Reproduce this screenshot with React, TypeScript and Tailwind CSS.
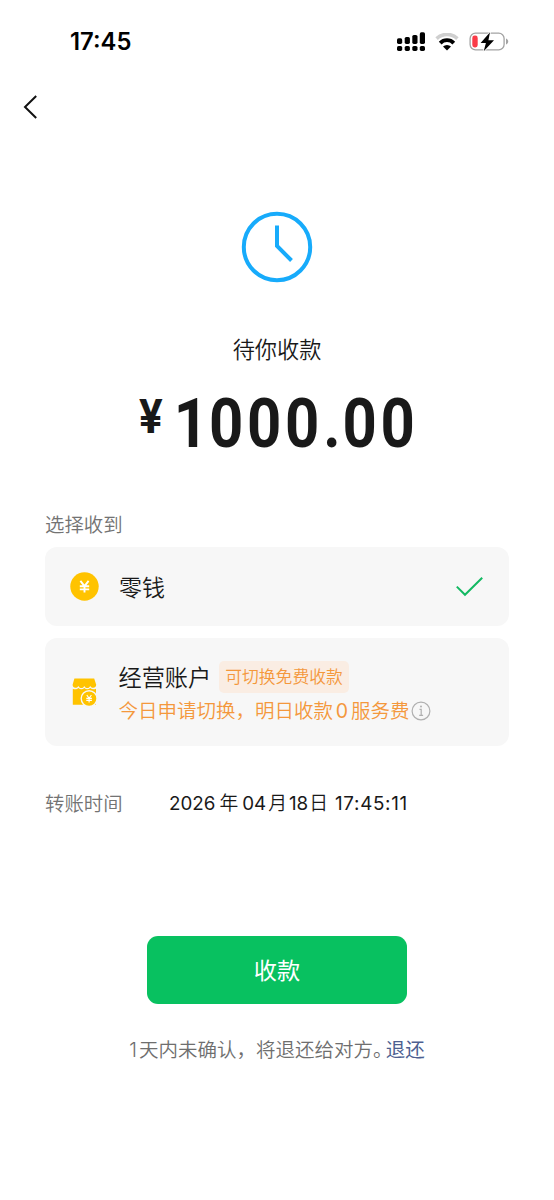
import { useState } from "react";

const StatusBar = () => (
  <div className="flex h-[83px] items-center justify-between pl-[70px] pr-[45px] text-black">
    <span className="font-['Inter'] text-[23.8px] font-semibold leading-6">17:45</span>
    <div className="flex items-center gap-[10px]">
      <svg width="28" height="20" viewBox="0 0 28 20" fill="currentColor">
        <rect x="0" y="6.3" width="5.2" height="5.6" rx="1.6" />
        <rect x="7.7" y="4.9" width="5.2" height="7" rx="1.6" />
        <rect x="15.3" y="2.9" width="5.2" height="9" rx="1.6" />
        <rect x="22.8" y="0.3" width="5.2" height="11.6" rx="1.6" />
        <rect x="0" y="13.9" width="5.2" height="5" rx="1.6" />
        <rect x="7.7" y="13.9" width="5.2" height="5" rx="1.6" />
        <rect x="15.3" y="13.9" width="5.2" height="5" rx="1.6" />
        <rect x="22.8" y="13.9" width="5.2" height="5" rx="1.6" />
      </svg>
      <svg width="24" height="18" viewBox="0 0 24 18" fill="none">
        <path d="M1.6 5.6A15 15 0 0 1 22.4 5.6" stroke="#cfcfcf" strokeWidth="3.6" />
        <path d="M5.2 10.1A9.4 9.4 0 0 1 18.8 10.1" stroke="currentColor" strokeWidth="3.8" />
        <path d="M12 17.6 8 13.6A5.6 5.6 0 0 1 16 13.6Z" fill="currentColor" />
      </svg>
      <svg width="40" height="20" viewBox="0 0 40 20" fill="none">
        <rect x="1.1" y="1.1" width="34" height="16.8" rx="5.4" stroke="#a3a3a3" strokeWidth="1.3" />
        <path d="M37 6.5v6c1.4-.5 2.2-1.6 2.2-3S38.4 7 37 6.5Z" fill="#a3a3a3" />
        <rect x="3.3" y="3.5" width="5.4" height="12" rx="2.4" fill="#fa3b48" />
        <path
          d="M21 0.3 11.6 10.9h5.3L14.7 19.3 25 8.2h-5.6Z"
          fill="currentColor"
          stroke="#fff"
          strokeWidth="1.6"
          strokeLinejoin="round"
          paintOrder="stroke"
        />
      </svg>
    </div>
  </div>
);

const ClockIcon = () => (
  <svg width="72" height="72" viewBox="0 0 72 72" fill="none" stroke="#17abfb" strokeWidth="4">
    <circle cx="36" cy="36" r="33.2" />
    <path d="M36 14.5v20.5l14.5 14.5" />
  </svg>
);

const CoinIcon = () => (
  <svg width="29" height="29" viewBox="0 0 29 29" fill="none">
    <circle cx="14.5" cy="14.5" r="14.2" fill="#ffc300" />
    <path
      d="M10.4 8.9 14.5 14.1 18.6 8.9M14.5 13.8V20.6M9.8 14.3H19.2M9.8 17.4H19.2"
      stroke="#fff"
      strokeWidth="1.9"
    />
  </svg>
);

const ShopIcon = () => (
  <svg width="26" height="29" viewBox="0 0 26 29" fill="none">
    <path
      d="M2.4 0.5H22.2L24.2 6.8C24.2 10.2 19.8 10.8 18.2 7.9 16.5 10.8 14 10.8 12.3 7.9 10.6 10.8 8.1 10.8 6.4 7.9 4.8 10.8 0.6 10.2 0.6 6.8Z"
      fill="#ffc300"
    />
    <path
      d="M0.8 10.7C3.2 11.7 5 11.2 6.4 10 8.3 11.6 10.5 11.6 12.3 10 14.2 11.6 16.4 11.6 18.2 10 19.8 11.3 21.8 11.7 24 10.7V26.8H0.8Z"
      fill="#ffc300"
    />
    <circle cx="17.1" cy="20.6" r="7.9" fill="#ffc300" stroke="#f7f7f7" strokeWidth="1.4" />
    <path
      d="M14.8 17 17.1 20.3 19.4 17M17.1 20V24.6M14.3 20.4H19.9M14.3 22.4H19.9"
      stroke="#fff"
      strokeWidth="1.1"
    />
  </svg>
);

const InfoIcon = () => (
  <svg width="20" height="20" viewBox="0 0 20 20" fill="none" stroke="#b0b0b0" strokeWidth="1.2">
    <circle cx="10" cy="10" r="8.9" />
    <path d="M8.5 8.4h1.7v6M8.2 14.4h3.9" />
    <circle cx="10" cy="5.6" r="1" fill="#b0b0b0" stroke="none" />
  </svg>
);

const CheckIcon = () => (
  <svg width="28" height="20" viewBox="0 0 28 20" fill="none" stroke="#13b962" strokeWidth="2">
    <path d="M0.8 9.6 9 17.8 26.2 0.8" />
  </svg>
);

type Account = "balance" | "business";

export default function App() {
  const [account, setAccount] = useState<Account>("balance");

  return (
    <main className="flex h-[1200px] w-[554px] flex-col bg-white font-['Inter','Noto_Sans_CJK_SC',sans-serif] font-[350] text-[#191919]">
      <StatusBar />

      <header className="flex h-[47px] items-center pl-[23px]">
        <button type="button" aria-label="返回">
          <svg width="15" height="26" viewBox="0 0 15 26" fill="none" stroke="#111" strokeWidth="2">
            <path d="M13.2 2 2 13 13.2 24" />
          </svg>
        </button>
      </header>

      <section className="flex flex-col items-center pt-[81px]">
        <ClockIcon />
        <h1 className="mt-[51px] text-[22.2px] leading-8">待你收款</h1>
        <div className="mt-[24px] flex h-[68px] self-start pl-[139px] font-['Roboto'] font-bold">
          <span className="mt-[3px] w-[32px] origin-left scale-x-[0.92] text-[48px] leading-[48px]">¥</span>
          <span className="flex origin-left scale-x-[0.88] text-[68px] leading-[68px] tracking-[4.2px]">
            <span className="ml-[3px] -mr-[3px]">1</span>
            <span>000</span>
            <span className="w-[22px] text-center">.</span>
            <span>00</span>
          </span>
        </div>
      </section>

      <section className="mt-[53px] px-[45px]">
        <h2 className="text-[19.4px] leading-[28px] text-[#737373]">选择收到</h2>

        <button
          type="button"
          onClick={() => setAccount("balance")}
          className="mt-[8px] flex h-[79px] w-full items-center rounded-xl bg-[#f7f7f7] pl-[25px] pr-[25px] text-left"
        >
          <CoinIcon />
          <span className="ml-[20px] flex-1 pt-[3px] text-[23px] leading-8">零钱</span>
          {account === "balance" && <CheckIcon />}
        </button>

        <button
          type="button"
          onClick={() => setAccount("business")}
          className="mt-[12px] flex h-[108px] w-full items-center rounded-xl bg-[#f7f7f7] pl-[27px] pr-[25px] text-left"
        >
          <ShopIcon />
          <span className="ml-[20.5px] flex flex-1 flex-col pt-[5px]">
            <span className="flex items-start">
              <span className="pt-px text-[23.2px] leading-8">经营账户</span>
              <span className="ml-[8px] flex h-[32px] items-center rounded-[5px] bg-[#faede3] px-[6px] text-[16.8px] leading-6 text-[#f4983c]">
                可切换免费收款
              </span>
            </span>
            <span className="flex h-[34px] items-center whitespace-nowrap text-[19.5px] leading-[28px] text-[#f4983c]">
              今日申请切换，明日收款
              <span className="w-[18px] text-center font-normal">0</span>
              服务费
              <span className="ml-px">
                <InfoIcon />
              </span>
            </span>
          </span>
          {account === "business" && <CheckIcon />}
        </button>
      </section>

      <dl className="mt-[44px] flex items-center px-[45px] leading-[28px]">
        <dt className="w-[124px] text-[19.4px] text-[#737373]">转账时间</dt>
        <dd className="flex whitespace-nowrap text-[18.8px] font-normal">
          <span>2026</span>
          <span className="ml-[4px] font-[350]">年</span>
          <span className="ml-[4px]">04</span>
          <span className="ml-[2px] font-[350]">月</span>
          <span className="ml-[2px]">18</span>
          <span className="ml-px font-[350]">日</span>
          <span className="ml-[7px] tracking-[0.7px]">17:45:11</span>
        </dd>
      </dl>

      <footer className="mt-[118px] flex flex-col items-center">
        <button
          type="button"
          className="h-[68px] w-[260px] rounded-[11px] bg-[#08c160] pt-[2px] text-[23.2px] font-normal text-white"
        >
          收款
        </button>
        <p className="mt-[32px] flex text-[19.5px] leading-[28px] text-[#6e6e6e]">
          <span className="mr-[2px]">1</span>
          <span>天内未确认，将退还给对方</span>
          <span className="mr-[3px] [font-feature-settings:'halt']">。</span>
          <a href="#" className="font-normal text-[#4d5f91]">退还</a>
        </p>
      </footer>
    </main>
  );
}
